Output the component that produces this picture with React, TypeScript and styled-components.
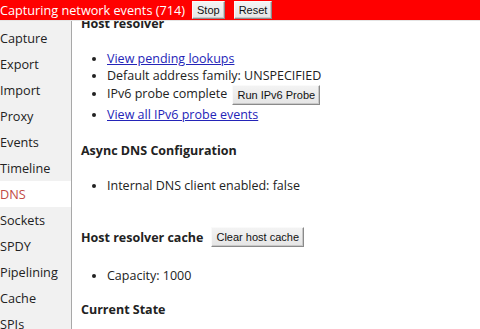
import React from "react";
import styled, { createGlobalStyle } from "styled-components";

const Global = createGlobalStyle`
  html, body { margin: 0; padding: 0; background: #fff; }
  body { font-family: "Open Sans", "Noto Sans", sans-serif; color: #222; overflow: hidden; }
`;

const Page = styled.div`
  width: 480px;
  height: 329px;
  display: flex;
  flex-direction: column;
  overflow: hidden;
`;

const TopBar = styled.div`
  height: 20px;
  background: #f00;
  border-bottom: 1px solid #e4e4e4;
  display: flex;
  align-items: center;
  flex-shrink: 0;
`;

const TopText = styled.span`
  color: #fff;
  font-size: 12.7px;
  line-height: 20px;
  white-space: nowrap;
  margin-right: 7px;
`;

const Button = styled.button<{ $gap?: number; $h?: number }>`
  font-family: "Liberation Sans", Arial, sans-serif;
  font-size: 11px;
  color: #111;
  background: linear-gradient(#f3f3f3, #e5e5e5);
  border: 1px solid;
  border-color: #fafafa #8a8a8a #8a8a8a #fafafa;
  box-shadow: inset -1px -1px 0 #c8c8c8;
  height: ${(p) => p.$h ?? 18}px;
  padding: 0 4px;
  margin: 1px 0 1px ${(p) => p.$gap ?? 0}px;
  vertical-align: middle;
  line-height: 14px;
`;

const Body = styled.div`
  flex: 1;
  display: flex;
  min-height: 0;
`;

const Sidebar = styled.nav`
  width: 71px;
  flex-shrink: 0;
  background: #f1f1f1;
  border-right: 1px solid #a8a8a8;
  padding-top: 4px;
  display: flex;
  flex-direction: column;
`;

const NavItem = styled.div<{ $active?: boolean }>`
  height: 26px;
  line-height: 26px;
  font-size: 12.7px;
  white-space: nowrap;
  background: ${(p) => (p.$active ? "#fff" : "transparent")};
  color: ${(p) => (p.$active ? "#c24a44" : "#222")};
`;

const Content = styled.main`
  flex: 1;
  overflow: hidden;
  padding-left: 9px;
  font-size: 12.5px;
`;

const Heading = styled.h4<{ $top?: number; $bottom?: number }>`
  margin: ${(p) => p.$top ?? 19}px 0 ${(p) => p.$bottom ?? 18}px;
  font-size: 12.5px;
  font-weight: 700;
  line-height: 17px;
  display: flex;
  align-items: center;
`;

const List = styled.ul`
  margin: 0;
  padding-left: 26px;
  list-style: disc;
`;

const Item = styled.li`
  line-height: 17px;
`;

const Link = styled.a`
  color: #2424b8;
  text-decoration: underline;
`;

const navItems = [
  "Capture",
  "Export",
  "Import",
  "Proxy",
  "Events",
  "Timeline",
  "DNS",
  "Sockets",
  "SPDY",
  "Pipelining",
  "Cache",
  "SPIs",
];

export default function App() {
  return (
    <Page>
      <Global />
      <TopBar>
        <TopText>Capturing network events (714)</TopText>
        <Button>Stop</Button>
        <Button $gap={9}>Reset</Button>
      </TopBar>
      <Body>
        <Sidebar>
          {navItems.map((n) => (
            <NavItem key={n} $active={n === "DNS"}>
              {n}
            </NavItem>
          ))}
        </Sidebar>
        <Content>
          <Heading $top={-6}>Host resolver</Heading>
          <List>
            <Item>
              <Link href="#">View pending lookups</Link>
            </Item>
            <Item>Default address family: UNSPECIFIED</Item>
            <Item>
              IPv6 probe complete <Button $gap={2} $h={20}>Run IPv6 Probe</Button>
            </Item>
            <Item>
              <Link href="#">View all IPv6 probe events</Link>
            </Item>
          </List>
          <Heading>Async DNS Configuration</Heading>
          <List>
            <Item>Internal DNS client enabled: false</Item>
          </List>
          <Heading $top={32} $bottom={19}>
            Host resolver cache <Button $gap={8} $h={20}>Clear host cache</Button>
          </Heading>
          <List>
            <Item>Capacity: 1000</Item>
          </List>
          <Heading $top={17}>Current State</Heading>
        </Content>
      </Body>
    </Page>
  );
}
